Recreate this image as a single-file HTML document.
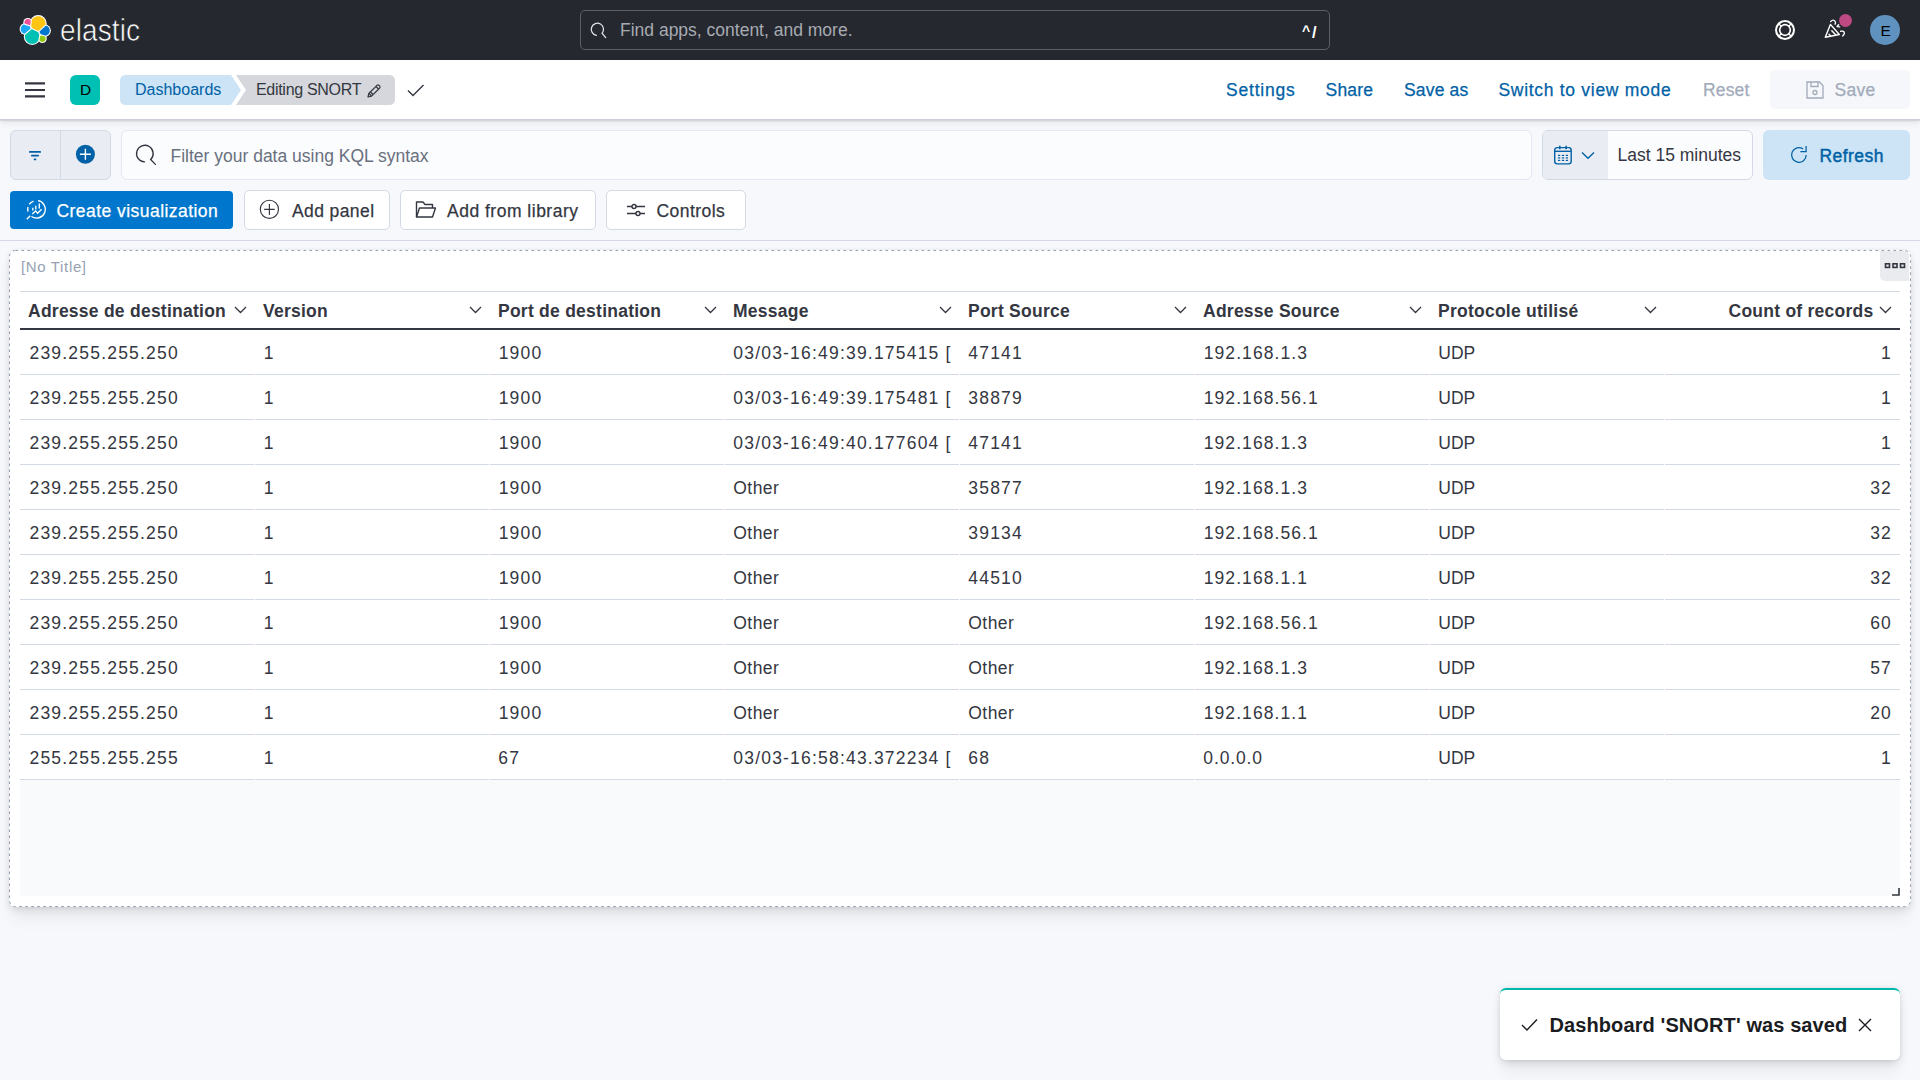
<!DOCTYPE html>
<html><head><meta charset="utf-8"><title>Elastic - SNORT dashboard</title>
<style>
html,body{margin:0;padding:0}
body{width:1920px;height:1080px;overflow:hidden;position:relative;background:#f7f8fc;font-family:"Liberation Sans",sans-serif}
.t{position:absolute;white-space:nowrap;line-height:40px;height:40px}
svg{display:block}
</style></head><body>
<div style="position:absolute;left:0;top:0;width:1920px;height:60px;background:#25282f"></div>
<svg style="position:absolute;left:17px;top:12px" width="36" height="36" viewBox="0 0 36 36"><circle cx="21.2" cy="11.6" r="8.5" fill="#fff"/><circle cx="10.9" cy="10.5" r="4.6" fill="#fff"/><circle cx="8.6" cy="17.0" r="6.0" fill="#fff"/><circle cx="15.2" cy="24.6" r="8.4" fill="#fff"/><circle cx="27.6" cy="18.6" r="6.300000000000001" fill="#fff"/><circle cx="25.4" cy="26.6" r="4.4" fill="#fff"/><path d="M28.60 11.60 L28.57 12.24 L28.53 12.56 L21.50 18.99 L21.33 18.99 L15.49 16.30 L15.14 15.84 L14.79 15.30 L14.49 14.73 L14.25 14.13 L14.22 14.05 L14.89 7.74 L15.14 7.36 L15.53 6.84 L15.97 6.37 L16.44 5.93 L16.96 5.54 L17.50 5.19 L18.07 4.89 L18.67 4.65 L19.28 4.45 L19.92 4.31 L20.56 4.23 L21.20 4.20 L21.84 4.23 L22.48 4.31 L23.12 4.45 L23.73 4.65 L24.33 4.89 L24.90 5.19 L25.44 5.54 L25.96 5.93 L26.43 6.37 L26.87 6.84 L27.26 7.36 L27.61 7.90 L27.91 8.47 L28.15 9.07 L28.35 9.68 L28.49 10.32 L28.57 10.96Z" fill="#fec514"/><path d="M13.21 13.12 L13.15 13.18 L12.91 13.37 L12.90 13.37 L7.54 11.48 L7.52 11.41 L7.45 11.11 L7.41 10.81 L7.40 10.50 L7.41 10.19 L7.45 9.89 L7.52 9.59 L7.61 9.30 L7.73 9.02 L7.87 8.75 L8.03 8.49 L8.22 8.25 L8.43 8.03 L8.65 7.82 L8.89 7.63 L9.15 7.47 L9.42 7.33 L9.70 7.21 L9.99 7.12 L10.29 7.05 L10.59 7.01 L10.90 7.00 L11.21 7.01 L11.51 7.05 L11.81 7.12 L12.10 7.21 L12.38 7.33 L12.65 7.47 L12.91 7.63 L13.15 7.82 L13.37 8.03 L13.58 8.25 L13.71 8.42Z" fill="#f04e98"/><path d="M7.68 21.81 L7.33 21.73 L6.92 21.60 L6.53 21.44 L6.15 21.24 L5.79 21.01 L5.45 20.75 L5.14 20.46 L4.85 20.15 L4.59 19.81 L4.36 19.45 L4.16 19.07 L4.00 18.68 L3.87 18.27 L3.77 17.85 L3.72 17.43 L3.70 17.00 L3.72 16.57 L3.77 16.15 L3.87 15.73 L4.00 15.32 L4.16 14.93 L4.36 14.55 L4.59 14.19 L4.85 13.85 L5.14 13.54 L5.45 13.25 L5.79 12.99 L6.15 12.76 L6.53 12.56 L6.88 12.41 L12.82 14.52 L12.84 14.55 L13.04 14.93 L13.20 15.32 L13.33 15.73 L13.43 16.15 L13.48 16.57 L13.49 16.76Z" fill="#1ba9f5"/><path d="M21.20 28.76 L21.18 28.79 L20.79 29.29 L20.36 29.76 L19.89 30.19 L19.39 30.58 L18.85 30.92 L18.29 31.22 L17.70 31.46 L17.09 31.65 L16.47 31.79 L15.84 31.87 L15.20 31.90 L14.56 31.87 L13.93 31.79 L13.31 31.65 L12.70 31.46 L12.11 31.22 L11.55 30.92 L11.01 30.58 L10.51 30.19 L10.04 29.76 L9.61 29.29 L9.22 28.79 L8.88 28.25 L8.58 27.69 L8.34 27.10 L8.15 26.49 L8.01 25.87 L7.93 25.24 L7.90 24.60 L7.93 23.96 L8.01 23.33 L8.11 22.90 L14.51 17.33 L14.56 17.33 L15.05 17.31 L20.85 19.99 L21.18 20.41 L21.52 20.95 L21.68 21.25 L21.87 21.66 L22.06 22.10 L22.25 22.71 L22.32 23.03Z" fill="#00bfb3"/><path d="M32.80 18.60 L32.78 19.05 L32.72 19.50 L32.62 19.95 L32.49 20.38 L32.31 20.80 L32.10 21.20 L31.86 21.58 L31.58 21.94 L31.28 22.28 L30.94 22.58 L30.58 22.86 L30.20 23.10 L29.80 23.31 L29.38 23.49 L28.95 23.62 L28.77 23.66 L24.01 22.35 L23.92 22.28 L23.62 21.94 L23.34 21.58 L23.10 21.20 L22.89 20.80 L22.71 20.38 L22.58 19.95 L22.49 19.57 L29.02 13.60 L29.38 13.71 L29.80 13.89 L30.20 14.10 L30.58 14.34 L30.94 14.62 L31.28 14.92 L31.58 15.26 L31.86 15.62 L32.10 16.00 L32.31 16.40 L32.49 16.82 L32.62 17.25 L32.72 17.70 L32.78 18.15Z" fill="#0077cc"/><path d="M28.70 26.60 L28.69 26.89 L28.65 27.17 L28.59 27.45 L28.50 27.73 L28.39 27.99 L28.26 28.25 L28.10 28.49 L27.93 28.72 L27.73 28.93 L27.52 29.13 L27.29 29.30 L27.05 29.46 L26.79 29.59 L26.53 29.70 L26.25 29.79 L25.97 29.85 L25.69 29.89 L25.40 29.90 L25.11 29.89 L24.83 29.85 L24.55 29.79 L24.27 29.70 L24.01 29.59 L23.75 29.46 L23.51 29.30 L23.28 29.13 L23.07 28.93 L22.87 28.72 L22.70 28.49 L22.54 28.25 L22.45 28.08 L23.23 24.12 L23.28 24.07 L23.51 23.90 L23.75 23.74 L24.01 23.61 L24.17 23.54 L28.02 24.60 L28.10 24.71 L28.26 24.95 L28.39 25.21 L28.50 25.47 L28.59 25.75 L28.65 26.03 L28.69 26.31Z" fill="#93c90e"/></svg>
<div class="t" style="left:60px;top:12.30px;font-size:28px;color:#fff;letter-spacing:0.1px;transform:scaleY(1.1);transform-origin:0 30.3px;-webkit-text-stroke:0.6px #25282f;">elastic</div>

<div style="position:absolute;left:580px;top:10px;width:748px;height:38px;border:1px solid #5b5f69;border-radius:5px;background:#25282f"></div>
<svg style="position:absolute;left:589px;top:21px" width="18" height="18" viewBox="0 0 18 18"><path d="M7.34 14.31 A6.1 6.1 0 1 1 13.07 12.22 L16.7 16.6" fill="none" stroke="#dfe5ef" stroke-width="1.25" stroke-linecap="round"/></svg>
<div class="t" style="left:620px;top:9.94px;font-size:17.5px;color:#a7abb2;letter-spacing:0px;">Find apps, content, and more.</div>

<div class="t" style="left:1302px;top:10.65px;font-size:14px;color:#fff;font-weight:700;letter-spacing:0px;">^</div>

<div class="t" style="left:1312px;top:11.68px;font-size:16.5px;color:#fff;font-weight:700;letter-spacing:0px;">/</div>

<svg style="position:absolute;left:1775px;top:20px" width="20" height="20" viewBox="0 0 20 20"><circle cx="10" cy="10" r="7.25" fill="none" stroke="#fff" stroke-width="5.5"/><g fill="none" stroke="#25282f" stroke-width="1.8" stroke-linecap="round"><path d="M6.21 4.17 A6.95 6.95 0 0 1 13.79 4.17"/><path d="M15.83 6.21 A6.95 6.95 0 0 1 15.83 13.79"/><path d="M13.79 15.83 A6.95 6.95 0 0 1 6.21 15.83"/><path d="M4.17 13.79 A6.95 6.95 0 0 1 4.17 6.21"/></g></svg>
<svg style="position:absolute;left:1822px;top:17px" width="26" height="24" viewBox="0 0 26 24"><g fill="none" stroke="#fff" stroke-width="1.4" stroke-linejoin="round" stroke-linecap="round"><path d="M3.3 20.2 L8.4 7.4 L17.3 17.5 Z"/><path d="M7.1 17.3 L8.6 18.9 M9.8 13.8 L13.4 17.6"/><path d="M8.7 4.5 Q11.5 1.8 13.2 4.5 Q13.9 5.8 13.1 7.2"/><path d="M16.6 7.8 L15.1 9.5 L17.6 9.9"/><path d="M18.7 14.3 Q22.5 13.6 22.3 16.3 Q22.1 18 20.5 19"/></g></svg>
<div style="position:absolute;left:1838.5px;top:13.5px;width:13px;height:13px;border-radius:50%;background:#bd4a82"></div>
<div style="position:absolute;left:1870px;top:15px;width:30px;height:30px;border-radius:50%;background:#6092c0"></div>
<div class="t" style="left:1880.5px;top:10.63px;font-size:15.5px;color:#000;letter-spacing:0px;">E</div>

<div style="position:absolute;left:0;top:60px;width:1920px;height:59px;background:#fff;border-bottom:1px solid #cbd0dc;box-shadow:0 1px 1.5px rgba(0,0,0,0.12),0 3px 7px rgba(0,0,0,0.08)"></div>
<svg style="position:absolute;left:25px;top:80px" width="20" height="20" viewBox="0 0 20 20"><path d="M0 3.4 H20 M0 10 H20 M0 16.3 H20" stroke="#343741" stroke-width="2.2"/></svg>
<div style="position:absolute;left:70px;top:75px;width:30px;height:30px;border-radius:6px;background:#00bfb3"></div>
<div class="t" style="left:80px;top:69.83px;font-size:15.5px;color:#000;letter-spacing:0px;">D</div>

<svg style="position:absolute;left:120px;top:75px" width="280" height="30" viewBox="0 0 280 30">
<path d="M6 0 H111 L121 15 L111 30 H6 Q0 30 0 24 V6 Q0 0 6 0Z" fill="#cce4f5"/>
<path d="M116 0 H269 Q275 0 275 6 V24 Q275 30 269 30 H116 L126 15 Z" fill="#d5d7dc"/>
</svg>
<div class="t" style="left:135px;top:69.86px;font-size:16px;color:#0061a6;letter-spacing:0.0px;">Dashboards</div>

<div class="t" style="left:256px;top:69.86px;font-size:16px;color:#343741;letter-spacing:-0.3px;">Editing SNORT</div>

<svg style="position:absolute;left:366px;top:83px" width="16" height="16" viewBox="0 0 16 16"><g fill="none" stroke="#343741" stroke-width="1.2" stroke-linejoin="round"><path d="M2 14 L2.8 10.5 L11 2.3 Q12 1.5 13 2.3 L13.7 3 Q14.5 4 13.7 5 L5.5 13.2 Z"/><path d="M3 10.5 L5.5 13 M4.5 9 L7 11.5 M10 3.5 L12.5 6"/></g></svg>
<svg style="position:absolute;left:407px;top:84px" width="18" height="14" viewBox="0 0 18 14"><path d="M1 6.5 L6 11.5 L16.5 1" fill="none" stroke="#343741" stroke-width="1.4"/></svg>
<div class="t" style="left:1226px;top:69.74px;font-size:17.5px;color:#0061a6;letter-spacing:0.8px;-webkit-text-stroke:0.25px #0061a6;">Settings</div>

<div class="t" style="left:1325.5px;top:69.74px;font-size:17.5px;color:#0061a6;letter-spacing:0.22px;-webkit-text-stroke:0.25px #0061a6;">Share</div>

<div class="t" style="left:1404px;top:69.74px;font-size:17.5px;color:#0061a6;letter-spacing:0.17px;-webkit-text-stroke:0.25px #0061a6;">Save as</div>

<div class="t" style="left:1498.5px;top:69.74px;font-size:17.5px;color:#0061a6;letter-spacing:0.7px;-webkit-text-stroke:0.25px #0061a6;">Switch to view mode</div>

<div class="t" style="left:1703px;top:69.74px;font-size:17.5px;color:#a2abba;letter-spacing:0.15px;-webkit-text-stroke:0.25px #a2abba;">Reset</div>

<div style="position:absolute;left:1770px;top:70px;width:140px;height:39px;border-radius:5px;background:#f6f7fa"></div>
<svg style="position:absolute;left:1805px;top:80px" width="20" height="20" viewBox="0 0 20 20"><g fill="none" stroke="#a2abba" stroke-width="1.3"><path d="M2 2 H14.5 L18 5.5 V18 H2 Z"/><path d="M6 2 V6.5 H13 V2"/><circle cx="10" cy="12.5" r="2"/></g></svg>
<div class="t" style="left:1834.5px;top:69.74px;font-size:17.5px;color:#a2abba;letter-spacing:0.3px;-webkit-text-stroke:0.25px #a2abba;">Save</div>

<div style="position:absolute;left:10px;top:130px;width:99px;height:48px;border:1px solid #d3dae6;border-radius:6px;background:#e9edf3"></div>
<div style="position:absolute;left:60px;top:131px;width:1px;height:48px;background:#d3dae6"></div>
<svg style="position:absolute;left:27px;top:149px" width="16" height="13" viewBox="0 0 16 13"><path d="M2.8 2.9 H13.2 M4.8 6.6 H11.2 M7.5 10.4 H8.5" stroke="#0061a6" stroke-width="1.7" stroke-linecap="round"/></svg>
<svg style="position:absolute;left:75px;top:144px" width="21" height="21" viewBox="0 0 21 21"><circle cx="10.4" cy="10.2" r="9.5" fill="#0061a6"/><path d="M10.4 4.7 V15.7 M4.9 10.2 H15.9" stroke="#fff" stroke-width="1.4"/></svg>
<div style="position:absolute;left:121px;top:130px;width:1409px;height:48px;border:1px solid #e3e8f2;border-radius:6px;background:#fbfcfd"></div>
<svg style="position:absolute;left:134px;top:143px" width="23" height="23" viewBox="0 0 23 23"><path d="M10.43 18.89 A8.3 8.3 0 1 1 16.63 16.57 L21.4 21.4" fill="none" stroke="#343741" stroke-width="1.35" stroke-linecap="round"/></svg>
<div class="t" style="left:170.5px;top:135.94px;font-size:17.5px;color:#69707d;letter-spacing:0px;">Filter your data using KQL syntax</div>

<div style="position:absolute;left:1542px;top:130px;width:209px;height:48px;border:1px solid #d3dae6;border-radius:6px;background:#fbfcfd;overflow:hidden"><div style="position:absolute;left:0;top:0;width:65px;height:48px;background:#e9edf3"></div></div>
<svg style="position:absolute;left:1553px;top:145px" width="20" height="21" viewBox="0 0 20 21"><g fill="none" stroke="#0061a6" stroke-width="1.4"><rect x="1.7" y="2.6" width="16.5" height="16.3" rx="2.6"/><path d="M1.7 6.3 H18.2"/><path d="M6.8 0.8 V4.2 M13.1 0.8 V4.2" stroke-width="1.6"/></g><g fill="#0061a6"><rect x="4.9" y="9.8" width="2.4" height="1.2" rx="0.5"/><rect x="8.8" y="9.8" width="2.4" height="1.2" rx="0.5"/><rect x="12.7" y="9.8" width="2.4" height="1.2" rx="0.5"/><rect x="4.9" y="12.3" width="2.4" height="1.2" rx="0.5"/><rect x="8.8" y="12.3" width="2.4" height="1.2" rx="0.5"/><rect x="12.7" y="12.3" width="2.4" height="1.2" rx="0.5"/><rect x="4.9" y="14.8" width="2.4" height="1.2" rx="0.5"/><rect x="8.8" y="14.8" width="2.4" height="1.2" rx="0.5"/><rect x="12.7" y="14.8" width="2.4" height="1.2" rx="0.5"/></g></svg>
<svg style="position:absolute;left:1581px;top:151px" width="14" height="9" viewBox="0 0 14 9"><path d="M1 1.5 L7 7.3 L13 1.5" fill="none" stroke="#0061a6" stroke-width="1.35"/></svg>
<div class="t" style="left:1617.5px;top:134.94px;font-size:17.5px;color:#343741;letter-spacing:0px;">Last 15 minutes</div>

<div style="position:absolute;left:1763px;top:130px;width:147px;height:50px;border-radius:6px;background:#cce4f5"></div>
<svg style="position:absolute;left:1790px;top:144px" width="20" height="20" viewBox="0 0 20 20"><g fill="none" stroke="#0061a6" stroke-width="1.25"><path d="M16.2 11 A7.3 7.3 0 1 1 13.09 5.02"/><path d="M16.1 2.1 V7.7 H10.4"/></g></svg>
<div class="t" style="left:1819.5px;top:135.94px;font-size:17.5px;color:#0061a6;letter-spacing:0.45px;-webkit-text-stroke:0.45px #0061a6;">Refresh</div>

<div style="position:absolute;left:10px;top:191px;width:223px;height:38px;border-radius:4px;background:#0077cc"></div>
<svg style="position:absolute;left:25px;top:200px" width="22" height="22" viewBox="0 0 22 22"><g fill="none" stroke="#fff" stroke-width="1.35"><path d="M13.03 0.63 A8.8 8.8 0 1 1 6.45 16.51"/><path d="M3.0 11.58 A8.8 8.8 0 0 1 3.0 7.02"/><path d="M4.29 4.25 A8.8 8.8 0 0 1 8.49 1.03"/><path d="M1.8 19.2 L5.2 15.8"/><path d="M7.8 7.7 V10.4 M10.8 5.8 V9.6 M14.3 3.5 V8.6"/><path d="M7.3 13.9 L10.6 10.9 L12.6 13.2 L16.6 9.3"/></g></svg>
<div class="t" style="left:56.5px;top:190.94px;font-size:17.5px;color:#fff;letter-spacing:0.45px;-webkit-text-stroke:0.25px #fff;">Create visualization</div>

<div style="position:absolute;left:244px;top:190px;width:144px;height:38px;border:1px solid #d3dae6;border-radius:5px;background:#fff"></div>
<div class="t" style="left:292px;top:190.94px;font-size:17.5px;color:#343741;letter-spacing:0.4px;-webkit-text-stroke:0.25px #343741;">Add panel</div>

<div style="position:absolute;left:400px;top:190px;width:194px;height:38px;border:1px solid #d3dae6;border-radius:5px;background:#fff"></div>
<div class="t" style="left:447px;top:190.94px;font-size:17.5px;color:#343741;letter-spacing:0.5px;-webkit-text-stroke:0.25px #343741;">Add from library</div>

<div style="position:absolute;left:606px;top:190px;width:138px;height:38px;border:1px solid #d3dae6;border-radius:5px;background:#fff"></div>
<div class="t" style="left:656.5px;top:190.94px;font-size:17.5px;color:#343741;letter-spacing:0.45px;-webkit-text-stroke:0.25px #343741;">Controls</div>

<svg style="position:absolute;left:259px;top:199px" width="21" height="21" viewBox="0 0 21 21"><g fill="none" stroke="#343741" stroke-width="1.15"><circle cx="10.4" cy="10.3" r="9.1"/><path d="M10.4 5 V15.9 M5.1 10.3 H15.7"/></g></svg>
<svg style="position:absolute;left:415px;top:200px" width="22" height="19" viewBox="0 0 22 19"><g fill="none" stroke="#343741" stroke-width="1.4" stroke-linejoin="round"><path d="M1.5 17 V2 H8 L10 4.5 H17.5 V8"/><path d="M1.5 17 L4.5 8 H20.5 L17.5 17 Z"/></g></svg>
<svg style="position:absolute;left:626px;top:203px" width="20" height="14" viewBox="0 0 20 14"><g fill="none" stroke="#343741" stroke-width="1.4"><path d="M1 3.5 H6 M10 3.5 H19 M1 10.5 H10 M14 10.5 H19"/><circle cx="8" cy="3.5" r="2"/><circle cx="12" cy="10.5" r="2"/></g></svg>
<div style="position:absolute;left:0;top:240px;width:1920px;height:1px;background:#d3dae6"></div>
<div style="position:absolute;left:9px;top:250px;width:1902px;height:657px;border-radius:6px;background:#fff;box-shadow:0 0.9px 4px -1px rgba(0,0,0,0.08),0 2.6px 8px -1px rgba(0,0,0,0.06),0 5.7px 12px -1px rgba(0,0,0,0.05),0 15px 15px -1px rgba(0,0,0,0.04)"></div>
<div style="position:absolute;left:1880px;top:251px;width:29px;height:30px;background:#e9ebee;border-radius:0 5px 0 5px"></div>
<svg style="position:absolute;left:1884px;top:262px" width="22" height="8" viewBox="0 0 22 8"><g fill="none" stroke="#343741" stroke-width="1.6"><rect x="1.5" y="1.8" width="4" height="3.6"/><rect x="9" y="1.8" width="4" height="3.6"/><rect x="16.5" y="1.8" width="4" height="3.6"/></g></svg>
<div class="t" style="left:21px;top:246.60px;font-size:15px;color:#98a2b3;letter-spacing:0.65px;">[No Title]</div>

<div style="position:absolute;left:20px;top:291px;width:1880px;height:1px;background:#d3dae6"></div>
<div style="position:absolute;left:20px;top:328px;width:1880px;height:2px;background:#343741"></div>
<div class="t" style="left:28px;top:290.64px;font-size:17.5px;color:#343741;font-weight:700;letter-spacing:0.25px;">Adresse de destination</div>

<svg style="position:absolute;left:234px;top:306px" width="13" height="8" viewBox="0 0 13 8"><path d="M1 1 L6.5 6.5 L12 1" fill="none" stroke="#343741" stroke-width="1.3"/></svg>
<div class="t" style="left:263px;top:290.64px;font-size:17.5px;color:#343741;font-weight:700;letter-spacing:0.25px;">Version</div>

<svg style="position:absolute;left:469px;top:306px" width="13" height="8" viewBox="0 0 13 8"><path d="M1 1 L6.5 6.5 L12 1" fill="none" stroke="#343741" stroke-width="1.3"/></svg>
<div class="t" style="left:498px;top:290.64px;font-size:17.5px;color:#343741;font-weight:700;letter-spacing:0.25px;">Port de destination</div>

<svg style="position:absolute;left:704px;top:306px" width="13" height="8" viewBox="0 0 13 8"><path d="M1 1 L6.5 6.5 L12 1" fill="none" stroke="#343741" stroke-width="1.3"/></svg>
<div class="t" style="left:733px;top:290.64px;font-size:17.5px;color:#343741;font-weight:700;letter-spacing:0.25px;">Message</div>

<svg style="position:absolute;left:939px;top:306px" width="13" height="8" viewBox="0 0 13 8"><path d="M1 1 L6.5 6.5 L12 1" fill="none" stroke="#343741" stroke-width="1.3"/></svg>
<div class="t" style="left:968px;top:290.64px;font-size:17.5px;color:#343741;font-weight:700;letter-spacing:0.25px;">Port Source</div>

<svg style="position:absolute;left:1174px;top:306px" width="13" height="8" viewBox="0 0 13 8"><path d="M1 1 L6.5 6.5 L12 1" fill="none" stroke="#343741" stroke-width="1.3"/></svg>
<div class="t" style="left:1203px;top:290.64px;font-size:17.5px;color:#343741;font-weight:700;letter-spacing:0.25px;">Adresse Source</div>

<svg style="position:absolute;left:1409px;top:306px" width="13" height="8" viewBox="0 0 13 8"><path d="M1 1 L6.5 6.5 L12 1" fill="none" stroke="#343741" stroke-width="1.3"/></svg>
<div class="t" style="left:1438px;top:290.64px;font-size:17.5px;color:#343741;font-weight:700;letter-spacing:0.25px;">Protocole utilisé</div>

<svg style="position:absolute;left:1644px;top:306px" width="13" height="8" viewBox="0 0 13 8"><path d="M1 1 L6.5 6.5 L12 1" fill="none" stroke="#343741" stroke-width="1.3"/></svg>
<div class="t" style="right:46.5px;top:290.64px;font-size:17.5px;color:#343741;font-weight:700;letter-spacing:0.25px;">Count of records</div>

<svg style="position:absolute;left:1879px;top:306px" width="13" height="8" viewBox="0 0 13 8"><path d="M1 1 L6.5 6.5 L12 1" fill="none" stroke="#343741" stroke-width="1.3"/></svg>
<div class="t" style="left:29.5px;top:332.54px;font-size:17.5px;color:#343741;letter-spacing:1.2px;">239.255.255.250</div>

<div class="t" style="left:263.7px;top:332.54px;font-size:17.5px;color:#343741;letter-spacing:1.2px;">1</div>

<div class="t" style="left:498.7px;top:332.54px;font-size:17.5px;color:#343741;letter-spacing:1.2px;">1900</div>

<div class="t" style="left:733.3px;top:332.54px;font-size:17.5px;color:#343741;letter-spacing:1.2px;">03/03-16:49:39.175415 [</div>

<div class="t" style="left:968.3px;top:332.54px;font-size:17.5px;color:#343741;letter-spacing:1.2px;">47141</div>

<div class="t" style="left:1203.7px;top:332.54px;font-size:17.5px;color:#343741;letter-spacing:1.08px;">192.168.1.3</div>

<div class="t" style="left:1438.3px;top:332.54px;font-size:17.5px;color:#343741;letter-spacing:0.0px;">UDP</div>

<div class="t" style="right:28px;top:332.54px;font-size:17.5px;color:#343741;letter-spacing:1.2px;">1</div>

<div style="position:absolute;left:20px;top:374px;width:1880px;height:1px;background:#d3dae6"></div>
<div style="position:absolute;left:254px;top:374px;width:1px;height:1px;background:#fff"></div>
<div style="position:absolute;left:489px;top:374px;width:1px;height:1px;background:#fff"></div>
<div style="position:absolute;left:724px;top:374px;width:1px;height:1px;background:#fff"></div>
<div style="position:absolute;left:959px;top:374px;width:1px;height:1px;background:#fff"></div>
<div style="position:absolute;left:1194px;top:374px;width:1px;height:1px;background:#fff"></div>
<div style="position:absolute;left:1429px;top:374px;width:1px;height:1px;background:#fff"></div>
<div style="position:absolute;left:1664px;top:374px;width:1px;height:1px;background:#fff"></div>
<div class="t" style="left:29.5px;top:377.54px;font-size:17.5px;color:#343741;letter-spacing:1.2px;">239.255.255.250</div>

<div class="t" style="left:263.7px;top:377.54px;font-size:17.5px;color:#343741;letter-spacing:1.2px;">1</div>

<div class="t" style="left:498.7px;top:377.54px;font-size:17.5px;color:#343741;letter-spacing:1.2px;">1900</div>

<div class="t" style="left:733.3px;top:377.54px;font-size:17.5px;color:#343741;letter-spacing:1.2px;">03/03-16:49:39.175481 [</div>

<div class="t" style="left:968.3px;top:377.54px;font-size:17.5px;color:#343741;letter-spacing:1.2px;">38879</div>

<div class="t" style="left:1203.7px;top:377.54px;font-size:17.5px;color:#343741;letter-spacing:1.08px;">192.168.56.1</div>

<div class="t" style="left:1438.3px;top:377.54px;font-size:17.5px;color:#343741;letter-spacing:0.0px;">UDP</div>

<div class="t" style="right:28px;top:377.54px;font-size:17.5px;color:#343741;letter-spacing:1.2px;">1</div>

<div style="position:absolute;left:20px;top:419px;width:1880px;height:1px;background:#d3dae6"></div>
<div style="position:absolute;left:254px;top:419px;width:1px;height:1px;background:#fff"></div>
<div style="position:absolute;left:489px;top:419px;width:1px;height:1px;background:#fff"></div>
<div style="position:absolute;left:724px;top:419px;width:1px;height:1px;background:#fff"></div>
<div style="position:absolute;left:959px;top:419px;width:1px;height:1px;background:#fff"></div>
<div style="position:absolute;left:1194px;top:419px;width:1px;height:1px;background:#fff"></div>
<div style="position:absolute;left:1429px;top:419px;width:1px;height:1px;background:#fff"></div>
<div style="position:absolute;left:1664px;top:419px;width:1px;height:1px;background:#fff"></div>
<div class="t" style="left:29.5px;top:422.54px;font-size:17.5px;color:#343741;letter-spacing:1.2px;">239.255.255.250</div>

<div class="t" style="left:263.7px;top:422.54px;font-size:17.5px;color:#343741;letter-spacing:1.2px;">1</div>

<div class="t" style="left:498.7px;top:422.54px;font-size:17.5px;color:#343741;letter-spacing:1.2px;">1900</div>

<div class="t" style="left:733.3px;top:422.54px;font-size:17.5px;color:#343741;letter-spacing:1.2px;">03/03-16:49:40.177604 [</div>

<div class="t" style="left:968.3px;top:422.54px;font-size:17.5px;color:#343741;letter-spacing:1.2px;">47141</div>

<div class="t" style="left:1203.7px;top:422.54px;font-size:17.5px;color:#343741;letter-spacing:1.08px;">192.168.1.3</div>

<div class="t" style="left:1438.3px;top:422.54px;font-size:17.5px;color:#343741;letter-spacing:0.0px;">UDP</div>

<div class="t" style="right:28px;top:422.54px;font-size:17.5px;color:#343741;letter-spacing:1.2px;">1</div>

<div style="position:absolute;left:20px;top:464px;width:1880px;height:1px;background:#d3dae6"></div>
<div style="position:absolute;left:254px;top:464px;width:1px;height:1px;background:#fff"></div>
<div style="position:absolute;left:489px;top:464px;width:1px;height:1px;background:#fff"></div>
<div style="position:absolute;left:724px;top:464px;width:1px;height:1px;background:#fff"></div>
<div style="position:absolute;left:959px;top:464px;width:1px;height:1px;background:#fff"></div>
<div style="position:absolute;left:1194px;top:464px;width:1px;height:1px;background:#fff"></div>
<div style="position:absolute;left:1429px;top:464px;width:1px;height:1px;background:#fff"></div>
<div style="position:absolute;left:1664px;top:464px;width:1px;height:1px;background:#fff"></div>
<div class="t" style="left:29.5px;top:467.54px;font-size:17.5px;color:#343741;letter-spacing:1.2px;">239.255.255.250</div>

<div class="t" style="left:263.7px;top:467.54px;font-size:17.5px;color:#343741;letter-spacing:1.2px;">1</div>

<div class="t" style="left:498.7px;top:467.54px;font-size:17.5px;color:#343741;letter-spacing:1.2px;">1900</div>

<div class="t" style="left:733.3px;top:467.54px;font-size:17.5px;color:#343741;letter-spacing:0.45px;">Other</div>

<div class="t" style="left:968.3px;top:467.54px;font-size:17.5px;color:#343741;letter-spacing:1.2px;">35877</div>

<div class="t" style="left:1203.7px;top:467.54px;font-size:17.5px;color:#343741;letter-spacing:1.08px;">192.168.1.3</div>

<div class="t" style="left:1438.3px;top:467.54px;font-size:17.5px;color:#343741;letter-spacing:0.0px;">UDP</div>

<div class="t" style="right:28px;top:467.54px;font-size:17.5px;color:#343741;letter-spacing:1.2px;">32</div>

<div style="position:absolute;left:20px;top:509px;width:1880px;height:1px;background:#d3dae6"></div>
<div style="position:absolute;left:254px;top:509px;width:1px;height:1px;background:#fff"></div>
<div style="position:absolute;left:489px;top:509px;width:1px;height:1px;background:#fff"></div>
<div style="position:absolute;left:724px;top:509px;width:1px;height:1px;background:#fff"></div>
<div style="position:absolute;left:959px;top:509px;width:1px;height:1px;background:#fff"></div>
<div style="position:absolute;left:1194px;top:509px;width:1px;height:1px;background:#fff"></div>
<div style="position:absolute;left:1429px;top:509px;width:1px;height:1px;background:#fff"></div>
<div style="position:absolute;left:1664px;top:509px;width:1px;height:1px;background:#fff"></div>
<div class="t" style="left:29.5px;top:512.54px;font-size:17.5px;color:#343741;letter-spacing:1.2px;">239.255.255.250</div>

<div class="t" style="left:263.7px;top:512.54px;font-size:17.5px;color:#343741;letter-spacing:1.2px;">1</div>

<div class="t" style="left:498.7px;top:512.54px;font-size:17.5px;color:#343741;letter-spacing:1.2px;">1900</div>

<div class="t" style="left:733.3px;top:512.54px;font-size:17.5px;color:#343741;letter-spacing:0.45px;">Other</div>

<div class="t" style="left:968.3px;top:512.54px;font-size:17.5px;color:#343741;letter-spacing:1.2px;">39134</div>

<div class="t" style="left:1203.7px;top:512.54px;font-size:17.5px;color:#343741;letter-spacing:1.08px;">192.168.56.1</div>

<div class="t" style="left:1438.3px;top:512.54px;font-size:17.5px;color:#343741;letter-spacing:0.0px;">UDP</div>

<div class="t" style="right:28px;top:512.54px;font-size:17.5px;color:#343741;letter-spacing:1.2px;">32</div>

<div style="position:absolute;left:20px;top:554px;width:1880px;height:1px;background:#d3dae6"></div>
<div style="position:absolute;left:254px;top:554px;width:1px;height:1px;background:#fff"></div>
<div style="position:absolute;left:489px;top:554px;width:1px;height:1px;background:#fff"></div>
<div style="position:absolute;left:724px;top:554px;width:1px;height:1px;background:#fff"></div>
<div style="position:absolute;left:959px;top:554px;width:1px;height:1px;background:#fff"></div>
<div style="position:absolute;left:1194px;top:554px;width:1px;height:1px;background:#fff"></div>
<div style="position:absolute;left:1429px;top:554px;width:1px;height:1px;background:#fff"></div>
<div style="position:absolute;left:1664px;top:554px;width:1px;height:1px;background:#fff"></div>
<div class="t" style="left:29.5px;top:557.54px;font-size:17.5px;color:#343741;letter-spacing:1.2px;">239.255.255.250</div>

<div class="t" style="left:263.7px;top:557.54px;font-size:17.5px;color:#343741;letter-spacing:1.2px;">1</div>

<div class="t" style="left:498.7px;top:557.54px;font-size:17.5px;color:#343741;letter-spacing:1.2px;">1900</div>

<div class="t" style="left:733.3px;top:557.54px;font-size:17.5px;color:#343741;letter-spacing:0.45px;">Other</div>

<div class="t" style="left:968.3px;top:557.54px;font-size:17.5px;color:#343741;letter-spacing:1.2px;">44510</div>

<div class="t" style="left:1203.7px;top:557.54px;font-size:17.5px;color:#343741;letter-spacing:1.08px;">192.168.1.1</div>

<div class="t" style="left:1438.3px;top:557.54px;font-size:17.5px;color:#343741;letter-spacing:0.0px;">UDP</div>

<div class="t" style="right:28px;top:557.54px;font-size:17.5px;color:#343741;letter-spacing:1.2px;">32</div>

<div style="position:absolute;left:20px;top:599px;width:1880px;height:1px;background:#d3dae6"></div>
<div style="position:absolute;left:254px;top:599px;width:1px;height:1px;background:#fff"></div>
<div style="position:absolute;left:489px;top:599px;width:1px;height:1px;background:#fff"></div>
<div style="position:absolute;left:724px;top:599px;width:1px;height:1px;background:#fff"></div>
<div style="position:absolute;left:959px;top:599px;width:1px;height:1px;background:#fff"></div>
<div style="position:absolute;left:1194px;top:599px;width:1px;height:1px;background:#fff"></div>
<div style="position:absolute;left:1429px;top:599px;width:1px;height:1px;background:#fff"></div>
<div style="position:absolute;left:1664px;top:599px;width:1px;height:1px;background:#fff"></div>
<div class="t" style="left:29.5px;top:602.54px;font-size:17.5px;color:#343741;letter-spacing:1.2px;">239.255.255.250</div>

<div class="t" style="left:263.7px;top:602.54px;font-size:17.5px;color:#343741;letter-spacing:1.2px;">1</div>

<div class="t" style="left:498.7px;top:602.54px;font-size:17.5px;color:#343741;letter-spacing:1.2px;">1900</div>

<div class="t" style="left:733.3px;top:602.54px;font-size:17.5px;color:#343741;letter-spacing:0.45px;">Other</div>

<div class="t" style="left:968.3px;top:602.54px;font-size:17.5px;color:#343741;letter-spacing:0.45px;">Other</div>

<div class="t" style="left:1203.7px;top:602.54px;font-size:17.5px;color:#343741;letter-spacing:1.08px;">192.168.56.1</div>

<div class="t" style="left:1438.3px;top:602.54px;font-size:17.5px;color:#343741;letter-spacing:0.0px;">UDP</div>

<div class="t" style="right:28px;top:602.54px;font-size:17.5px;color:#343741;letter-spacing:1.2px;">60</div>

<div style="position:absolute;left:20px;top:644px;width:1880px;height:1px;background:#d3dae6"></div>
<div style="position:absolute;left:254px;top:644px;width:1px;height:1px;background:#fff"></div>
<div style="position:absolute;left:489px;top:644px;width:1px;height:1px;background:#fff"></div>
<div style="position:absolute;left:724px;top:644px;width:1px;height:1px;background:#fff"></div>
<div style="position:absolute;left:959px;top:644px;width:1px;height:1px;background:#fff"></div>
<div style="position:absolute;left:1194px;top:644px;width:1px;height:1px;background:#fff"></div>
<div style="position:absolute;left:1429px;top:644px;width:1px;height:1px;background:#fff"></div>
<div style="position:absolute;left:1664px;top:644px;width:1px;height:1px;background:#fff"></div>
<div class="t" style="left:29.5px;top:647.54px;font-size:17.5px;color:#343741;letter-spacing:1.2px;">239.255.255.250</div>

<div class="t" style="left:263.7px;top:647.54px;font-size:17.5px;color:#343741;letter-spacing:1.2px;">1</div>

<div class="t" style="left:498.7px;top:647.54px;font-size:17.5px;color:#343741;letter-spacing:1.2px;">1900</div>

<div class="t" style="left:733.3px;top:647.54px;font-size:17.5px;color:#343741;letter-spacing:0.45px;">Other</div>

<div class="t" style="left:968.3px;top:647.54px;font-size:17.5px;color:#343741;letter-spacing:0.45px;">Other</div>

<div class="t" style="left:1203.7px;top:647.54px;font-size:17.5px;color:#343741;letter-spacing:1.08px;">192.168.1.3</div>

<div class="t" style="left:1438.3px;top:647.54px;font-size:17.5px;color:#343741;letter-spacing:0.0px;">UDP</div>

<div class="t" style="right:28px;top:647.54px;font-size:17.5px;color:#343741;letter-spacing:1.2px;">57</div>

<div style="position:absolute;left:20px;top:689px;width:1880px;height:1px;background:#d3dae6"></div>
<div style="position:absolute;left:254px;top:689px;width:1px;height:1px;background:#fff"></div>
<div style="position:absolute;left:489px;top:689px;width:1px;height:1px;background:#fff"></div>
<div style="position:absolute;left:724px;top:689px;width:1px;height:1px;background:#fff"></div>
<div style="position:absolute;left:959px;top:689px;width:1px;height:1px;background:#fff"></div>
<div style="position:absolute;left:1194px;top:689px;width:1px;height:1px;background:#fff"></div>
<div style="position:absolute;left:1429px;top:689px;width:1px;height:1px;background:#fff"></div>
<div style="position:absolute;left:1664px;top:689px;width:1px;height:1px;background:#fff"></div>
<div class="t" style="left:29.5px;top:692.54px;font-size:17.5px;color:#343741;letter-spacing:1.2px;">239.255.255.250</div>

<div class="t" style="left:263.7px;top:692.54px;font-size:17.5px;color:#343741;letter-spacing:1.2px;">1</div>

<div class="t" style="left:498.7px;top:692.54px;font-size:17.5px;color:#343741;letter-spacing:1.2px;">1900</div>

<div class="t" style="left:733.3px;top:692.54px;font-size:17.5px;color:#343741;letter-spacing:0.45px;">Other</div>

<div class="t" style="left:968.3px;top:692.54px;font-size:17.5px;color:#343741;letter-spacing:0.45px;">Other</div>

<div class="t" style="left:1203.7px;top:692.54px;font-size:17.5px;color:#343741;letter-spacing:1.08px;">192.168.1.1</div>

<div class="t" style="left:1438.3px;top:692.54px;font-size:17.5px;color:#343741;letter-spacing:0.0px;">UDP</div>

<div class="t" style="right:28px;top:692.54px;font-size:17.5px;color:#343741;letter-spacing:1.2px;">20</div>

<div style="position:absolute;left:20px;top:734px;width:1880px;height:1px;background:#d3dae6"></div>
<div style="position:absolute;left:254px;top:734px;width:1px;height:1px;background:#fff"></div>
<div style="position:absolute;left:489px;top:734px;width:1px;height:1px;background:#fff"></div>
<div style="position:absolute;left:724px;top:734px;width:1px;height:1px;background:#fff"></div>
<div style="position:absolute;left:959px;top:734px;width:1px;height:1px;background:#fff"></div>
<div style="position:absolute;left:1194px;top:734px;width:1px;height:1px;background:#fff"></div>
<div style="position:absolute;left:1429px;top:734px;width:1px;height:1px;background:#fff"></div>
<div style="position:absolute;left:1664px;top:734px;width:1px;height:1px;background:#fff"></div>
<div class="t" style="left:29.5px;top:737.54px;font-size:17.5px;color:#343741;letter-spacing:1.2px;">255.255.255.255</div>

<div class="t" style="left:263.7px;top:737.54px;font-size:17.5px;color:#343741;letter-spacing:1.2px;">1</div>

<div class="t" style="left:498.3px;top:737.54px;font-size:17.5px;color:#343741;letter-spacing:1.2px;">67</div>

<div class="t" style="left:733.3px;top:737.54px;font-size:17.5px;color:#343741;letter-spacing:1.2px;">03/03-16:58:43.372234 [</div>

<div class="t" style="left:968.3px;top:737.54px;font-size:17.5px;color:#343741;letter-spacing:1.2px;">68</div>

<div class="t" style="left:1203.3px;top:737.54px;font-size:17.5px;color:#343741;letter-spacing:0.87px;">0.0.0.0</div>

<div class="t" style="left:1438.3px;top:737.54px;font-size:17.5px;color:#343741;letter-spacing:0.0px;">UDP</div>

<div class="t" style="right:28px;top:737.54px;font-size:17.5px;color:#343741;letter-spacing:1.2px;">1</div>

<div style="position:absolute;left:20px;top:779px;width:1880px;height:1px;background:#d3dae6"></div>
<div style="position:absolute;left:254px;top:779px;width:1px;height:1px;background:#fff"></div>
<div style="position:absolute;left:489px;top:779px;width:1px;height:1px;background:#fff"></div>
<div style="position:absolute;left:724px;top:779px;width:1px;height:1px;background:#fff"></div>
<div style="position:absolute;left:959px;top:779px;width:1px;height:1px;background:#fff"></div>
<div style="position:absolute;left:1194px;top:779px;width:1px;height:1px;background:#fff"></div>
<div style="position:absolute;left:1429px;top:779px;width:1px;height:1px;background:#fff"></div>
<div style="position:absolute;left:1664px;top:779px;width:1px;height:1px;background:#fff"></div>
<div style="position:absolute;left:20px;top:780px;width:1880px;height:116px;background:#f9fafb"></div>
<svg style="position:absolute;left:1892px;top:888px" width="8" height="8" viewBox="0 0 8 8"><path d="M7 0 V7 H0" fill="none" stroke="#343741" stroke-width="1.6"/></svg>
<svg style="position:absolute;left:9px;top:250px;z-index:5" width="1902" height="657" viewBox="0 0 1902 657"><rect x="0.5" y="0.5" width="1901" height="656" rx="6" fill="none" stroke="#939cb0" stroke-width="1" stroke-dasharray="2.6 3.4"/></svg>
<div style="position:absolute;left:1500px;top:988px;width:400px;height:72px;border-radius:6px;background:#fff;border-top:2px solid #00b8aa;box-sizing:border-box;box-shadow:0 0 10px rgba(0,0,0,0.05),0 0.9px 4px -1px rgba(0,0,0,0.08),0 2.6px 8px -1px rgba(0,0,0,0.06),0 5.7px 12px -1px rgba(0,0,0,0.05),0 15px 15px -1px rgba(0,0,0,0.04)"></div>
<svg style="position:absolute;left:1521px;top:1018px" width="17" height="14" viewBox="0 0 17 14"><path d="M1 7 L6 12 L16 1.5" fill="none" stroke="#1a1c21" stroke-width="1.4"/></svg>
<div class="t" style="left:1549.5px;top:1005.07px;font-size:20px;color:#1a1c21;font-weight:700;letter-spacing:0.1px;">Dashboard 'SNORT' was saved</div>

<svg style="position:absolute;left:1858px;top:1018px" width="14" height="14" viewBox="0 0 14 14"><path d="M1 1 L13 13 M13 1 L1 13" stroke="#1a1c21" stroke-width="1.4"/></svg>
</body></html>
